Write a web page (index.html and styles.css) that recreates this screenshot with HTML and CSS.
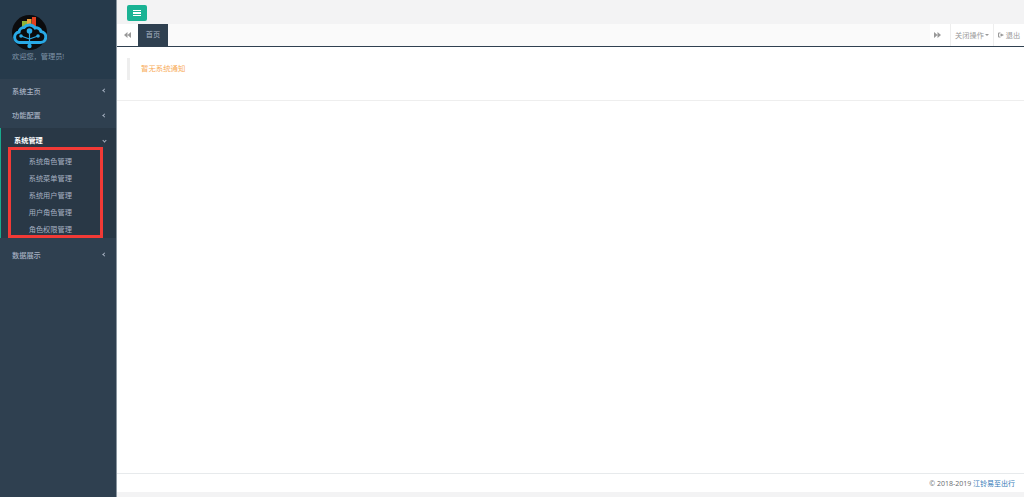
FILE: index.html
```html
<!DOCTYPE html>
<html>
<head>
<meta charset='utf-8'/>
<title>首页</title>
<link rel="stylesheet" href="styles.css">
</head>
<body>
<div id='wrapper'>
<div id='sidebar'>
  <div class='profile'>
    <svg class='logo' width='35' height='35' viewBox='0 0 35 35'>
      <circle cx='17.500' cy='17.500' r='17.500' fill='#0b0b0d'/>
      <rect x='10' y='6' width='5' height='8' fill='#8fb33a'/>
      <rect x='15' y='4' width='4.500' height='9' fill='#e8a13a'/>
      <rect x='20' y='2' width='4' height='11' fill='#e2401f'/>
      <path d='M7.500 27.500h20a5.500 5.500 0 0 0 1.500-11 5 5 0 0 0-6-3.500 7 7 0 0 0-11-.5 5 5 0 0 0-5 4.500 5.300 5.300 0 0 0 .5 10.500z' fill='#0b0b0d' stroke='#29a9e6' stroke-width='3'/>
      <path d='M17.500 16v8M17.500 24L9 21M17.500 24l8.500-3M17.500 24v7' fill='none' stroke='#29a9e6' stroke-width='1.200'/>
      <circle cx='17.500' cy='16' r='2.800' fill='#29a9e6'/>
      <circle cx='9' cy='21' r='1.800' fill='#29a9e6'/>
      <circle cx='26' cy='21' r='1.800' fill='#29a9e6'/>
      <circle cx='17.500' cy='31' r='2.200' fill='#29a9e6'/>
    </svg>
    <div class='welcome'>欢迎您，管理员!</div>
  </div>
  <ul class='menu'>
    <li class='item'><span>系统主页</span><i class='arrow'></i></li>
    <li class='item'><span>功能配置</span><i class='arrow'></i></li>
    <li class='group'>
      <div class='item current'><span>系统管理</span><i class='arrow down'></i></div>
      <ul class='submenu'>
        <li>系统角色管理</li>
        <li>系统菜单管理</li>
        <li>系统用户管理</li>
        <li>用户角色管理</li>
        <li>角色权限管理</li>
      </ul>
    </li>
    <li class='item'><span>数据展示</span><i class='arrow'></i></li>
  </ul>
</div>
<div id='main'>
  <div class='topbar'>
    <button class='toggle'><span></span><span></span><span></span></button>
  </div>
  <div class='tabs'>
    <div class='tab-btn'>
      <svg width='7' height='6' viewBox='0 0 7 6'><path d='M3.500 0v6L0 3zM7 0v6L3.500 3z' fill='#999'/></svg>
    </div>
    <div class='tab'>首页</div>
    <div class='tabs-space'></div>
    <div class='tab-btn edge forward'>
      <svg width='7' height='6' viewBox='0 0 7 6'><path d='M0 0v6l3.500-3zM3.500 0v6L7 3z' fill='#999'/></svg>
    </div>
    <div class='tab-btn edge close'>关闭操作<i class='caret'></i></div>
    <div class='tab-btn edge logout'>
      <svg width='6' height='6' viewBox='0 0 6 6'><path d='M2.500 .5H1a1 1 0 0 0-1 1v3a1 1 0 0 0 1 1h1.500v-1H1v-3h1.500zM3 1.500v1H1.800v1H3v1L6 3z' fill='#999'/></svg>
      退出
    </div>
  </div>
  <div class='content'>
    <div class='notice'>暂无系统通知</div>
  </div>
  <div class='footer'>© 2018-2019 <a>江铃易至出行</a></div>
</div>
</div>
</body>
</html>
```
FILE: styles.css
```css
html, body {
    margin: 0;
    height: 100%;
    overflow: hidden;
}
body {
    font-family: "Open Sans", "Noto Sans CJK SC", sans-serif;
    font-size: 7.2px;
    color: #676a6c;
    background: #f3f3f4;
}
ul {
    margin: 0;
    padding: 0;
    list-style: none;
}
#wrapper {
    display: flex;
    height: 497px;
}
#sidebar {
    width: 116px;
    flex: none;
    background: #2f4050;
    border-right: 1px solid #8a96a0;
}
.profile {
    height: 79px;
    box-sizing: border-box;
    padding: 15px 0 0 12px;
    background: #263a4b;
}
.logo {
    display: block;
}
.welcome {
    font-size: 7.2px;
    line-height: 12px;
    color: #8095a8;
}
.item {
    display: flex;
    justify-content: space-between;
    align-items: center;
    padding: 0 10px 1px 12px;
    color: #a7b1c2;
    font-weight: 500;
}
.menu > .item {
    height: 23.500px;
}
.arrow {
    width: 2px;
    height: 2px;
    border-left: 1px solid #a7b1c2;
    border-bottom: 1px solid #a7b1c2;
    transform: rotate(45deg);
}
.arrow.down {
    transform: rotate(-45deg);
}
.group {
    background: #293846;
    border-left: 1px solid #19aa8d;
}
.item.current {
    height: 14px;
    padding: 5px 10px 0 13px;
    color: #fff;
    font-weight: 700;
}
.submenu {
    height: 91px;
    box-sizing: border-box;
    margin: 0 13px 5px 7px;
    padding: 2.500px 0 0 17.700px;
    border: 3px solid #f23a36;
}
.submenu li {
    height: 17px;
    line-height: 17px;
    color: #a7b1c2;
}
#main {
    flex: 1;
    display: flex;
    flex-direction: column;
    min-width: 0;
}
.topbar {
    height: 24px;
    background: #f3f3f4;
    padding: 5px 0 0 10px;
    box-sizing: border-box;
}
.toggle {
    display: flex;
    flex-direction: column;
    justify-content: center;
    align-items: center;
    gap: 1px;
    width: 20px;
    height: 16px;
    padding: 0;
    border: 0;
    border-radius: 2px;
    background: #1ab394;
}
.toggle span {
    width: 8px;
    height: 1.500px;
    background: #fff;
}
.tabs {
    display: flex;
    height: 23px;
    background: #fafafa;
    border-bottom: 1.500px solid #2f4050;
    box-sizing: border-box;
    line-height: 21px;
}
.tab-btn {
    display: flex;
    align-items: center;
    justify-content: center;
    width: 21px;
    background: #fff;
    color: #999;
}
.tab-btn.edge {
    border-left: 1px solid #eee;
}
.tab-btn.forward {
    width: 20px;
    box-sizing: border-box;
    padding-right: 6px;
    border-left: 0;
}
.tab-btn.close {
    width: 42px;
}
.tab-btn.logout {
    width: 30px;
    gap: 2px;
}
.caret {
    margin-left: 1px;
    border-left: 2px solid transparent;
    border-right: 2px solid transparent;
    border-top: 2px solid #999;
}
.tab {
    width: 30px;
    text-align: center;
    background: #2f4050;
    color: #a7b1c2;
}
.tabs-space {
    flex: 1;
}
.content {
    flex: 1;
    background: #fff;
}
.notice {
    display: flex;
    height: 54px;
    box-sizing: border-box;
    padding: 11px 0 0 10px;
    border-bottom: 1px solid #eee;
    color: #f8ac59;
    font-size: 7.400px;
    line-height: 20px;
}
.notice::before {
    content: '';
    width: 3px;
    height: 22px;
    margin-right: 11px;
    background: #eee;
}
.footer {
    height: 19px;
    margin-bottom: 5px;
    box-sizing: border-box;
    background: #fff;
    border-top: 1px solid #e7eaec;
    padding-right: 9px;
    text-align: right;
    line-height: 19px;
    font-size: 7px;
}
.footer a {
    color: #337ab7;
}
```
